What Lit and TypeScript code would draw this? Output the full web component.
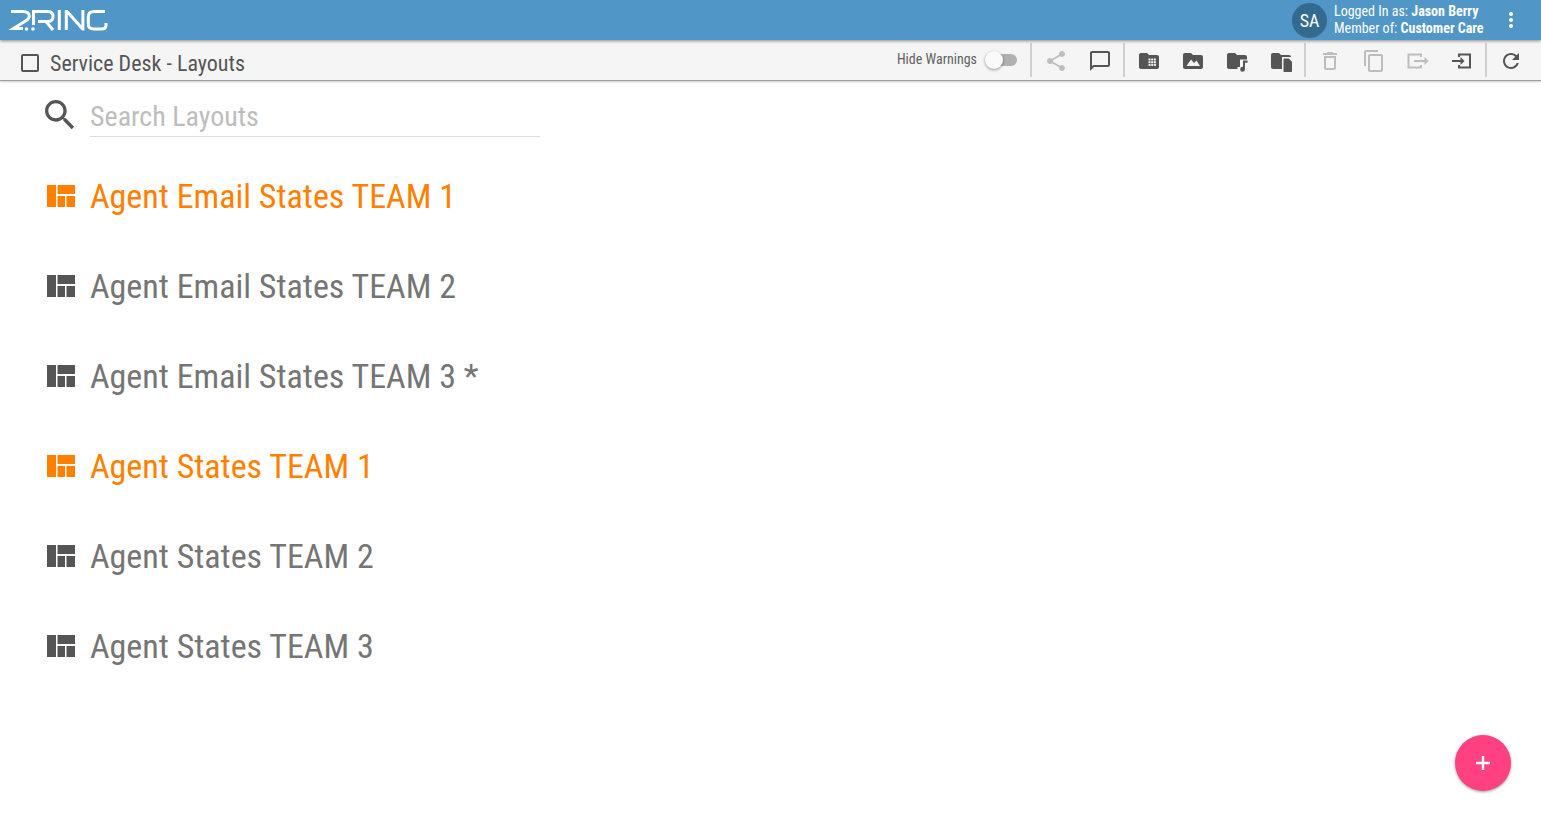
import { LitElement, html, css, svg } from "lit";
import { customElement } from "lit/decorators.js";

const p = (d: string, size = 24) => html`<svg width=${size} height=${size} viewBox="0 0 24 24" fill="currentColor"><path d=${d}></path></svg>`;
const ICONS: Record<string, string> = {
  share: "M18 16.08c-.76 0-1.44.3-1.96.77L8.91 12.7c.05-.23.09-.46.09-.7s-.04-.47-.09-.7l7.05-4.11c.54.5 1.25.81 2.04.81 1.66 0 3-1.34 3-3s-1.34-3-3-3-3 1.34-3 3c0 .24.04.47.09.7L8.04 9.81C7.5 9.31 6.79 9 6 9c-1.66 0-3 1.34-3 3s1.34 3 3 3c.79 0 1.5-.31 2.04-.81l7.12 4.16c-.05.21-.08.43-.08.65 0 1.61 1.31 2.92 2.92 2.92s2.92-1.31 2.92-2.92-1.31-2.92-2.92-2.92z",
  comment: "M20 2H4c-1.1 0-2 .9-2 2v18l4-4h14c1.1 0 2-.9 2-2V4c0-1.1-.9-2-2-2zm0 14H5.17L4 17.17V4h16v12z",
  folder: "M10 4H4c-1.1 0-2 .9-2 2v12c0 1.1.9 2 2 2h16c1.1 0 2-.9 2-2V8c0-1.1-.9-2-2-2h-8l-2-2z",
  trash: "M6 19c0 1.1.9 2 2 2h8c1.1 0 2-.9 2-2V7H6v12zM8 9h8v10H8V9zm7.500-5l-1-1h-5l-1 1H5v2h14V4h-3.500z",
  copy: "M16 1H4c-1.100 0-2 .9-2 2v14h2V3h12V1zm3 4H8c-1.100 0-2 .9-2 2v14c0 1.100.9 2 2 2h11c1.100 0 2-.9 2-2V7c0-1.100-.9-2-2-2zm0 16H8V7h11v14z",
  exit: "M16 8V4.500H1.500v15H16V16h-2v1.500H3.500v-11H14V8zM8 11h10.500V8l4 4-4 4v-3H8z",
  enter: "M8 8V4.500h13v15H8V16h2v1.500h9v-11h-9V8zM2 11h8.500V8l4 4-4 4v-3H2z",
  refresh: "M17.650 6.350C16.200 4.900 14.210 4 12 4c-4.420 0-7.990 3.580-7.990 8s3.570 8 7.990 8c3.730 0 6.840-2.550 7.730-6h-2.080c-.82 2.330-3.040 4-5.650 4-3.310 0-6-2.690-6-6s2.690-6 6-6c1.660 0 3.140.69 4.220 1.780L13 11h7V4l-2.350 2.350z",
  search: "M15.500 14h-.79l-.28-.27C15.410 12.590 16 11.110 16 9.500 16 5.910 13.090 3 9.500 3S3 5.910 3 9.500 5.910 16 9.500 16c1.610 0 3.090-.59 4.230-1.570l.27.28v.79l5 4.990L20.490 19l-4.990-5zm-6 0C7.010 14 5 11.990 5 9.500S7.010 5 9.500 5 14 7.010 14 9.500 11.990 14 9.500 14z",
};
const ITEMS = [
  ["Agent Email States TEAM 1", true],
  ["Agent Email States TEAM 2", false],
  ["Agent Email States TEAM 3 *", false],
  ["Agent States TEAM 1", true],
  ["Agent States TEAM 2", false],
  ["Agent States TEAM 3", false],
] as const;

@customElement("app-root")
export class AppRoot extends LitElement {
  static styles = css`
    :host { display: block; height: 821px; position: relative; overflow: hidden; background: #fff; font-family: Roboto, sans-serif; font-stretch: 75%; color: #616161; }
    .top { height: 40px; background: #5096c6; display: flex; align-items: center; color: #fff; box-shadow: 0 1px 3px rgba(0,0,0,.45); position: relative; z-index: 2; }
    .logo { margin-left: 8px; display: block; }
    .spacer { flex: 1; }
    .avatar { width: 35px; height: 35px; border-radius: 50%; background: #356a90; display: flex; align-items: center; justify-content: center; font-size: 18px; margin-right: 7px; }
    .who { font-size: 14px; line-height: 17px; width: 165px; }
    .who b { font-weight: 700; }
    .dots { width: 24px; display: flex; flex-direction: column; align-items: center; gap: 2px; margin-right: 18px; }
    .dots i { width: 4px; height: 4px; border-radius: 50%; background: #fff; }
    .bar { height: 41px; box-sizing: border-box; background: #f5f5f5; border-bottom: 1px solid #9e9e9e; box-shadow: 0 1px 2px rgba(0,0,0,.2); display: flex; align-items: center; }
    .check { width: 14px; height: 14px; border: 2px solid #555; border-radius: 2px; margin: 6px 0 0 21px; }
    .title { font-size: 22px; color: #555; margin: 6px 0 0 11px; }
    .hide { font-size: 14px; color: #616161; margin: 0 8px 2px 0; }
    .switch { width: 32px; height: 20px; position: relative; margin-right: 12px; }
    .track { position: absolute; left: 5px; right: 0; top: 4px; height: 12px; border-radius: 6px; background: #b0b0b0; }
    .thumb { position: absolute; left: 0; top: 1px; width: 18px; height: 18px; border-radius: 50%; background: #fafafa; box-shadow: 0 1px 3px rgba(0,0,0,.4); }
    .sep { width: 2px; height: 34px; background: #d0d0d0; margin: 0 2px 0 1px; }
    .ico { width: 44px; height: 38px; margin-top: 2px; display: flex; align-items: center; justify-content: center; color: #555; }
    .ico.dim { color: #bdbdbd; }
    .end { width: 8px; }
    .search { display: flex; align-items: flex-start; padding: 14px 0 0 40px; }
    .search svg { color: #555; display: block; }
    .field { margin-left: 10px; width: 450px; height: 42px; box-sizing: border-box; border-bottom: 1px solid #ddd; font-size: 28px; color: #bdbdbd; line-height: 44px; }
    .list { padding: 14px 0 0 45px; }
    .row { height: 90px; display: flex; align-items: center; font-size: 34px; color: #757575; }
    .row.on { color: #ff8000; }
    .row svg { margin-right: 14px; display: block; color: #555; }
    .row.on svg { color: #ff8000; }
    .fab { position: absolute; left: 1455px; top: 735px; width: 56px; height: 56px; border-radius: 50%; background: #ff4081; color: #fff; display: flex; align-items: center; justify-content: center; box-shadow: 0 1px 3px rgba(0,0,0,.4); }
  `;
  ico(name: string, dim = false) {
    return html`<div class="ico ${dim ? "dim" : ""}">${p(ICONS[name])}</div>`;
  }
  folderBadge(extra: unknown) {
    return html`<div class="ico"><svg width="24" height="24" viewBox="0 0 24 24" fill="currentColor"><path d=${ICONS.folder}></path>${extra}</svg></div>`;
  }
  render() {
    const cells = [11.5, 14.2, 16.9].flatMap((x) => [9.5, 12.2, 14.9].map((y) => svg`<rect x=${x} y=${y} width="2" height="2" fill="#f5f5f5"></rect>`));
    return html`
      <div class="top">
        <svg class="logo" width="100" height="24" viewBox="8 8 100 24" fill="none" stroke="#fff" stroke-width="3">
          <path d="M11 11.500h11.500c4.500 0 6.800 1.500 6.800 4.500 0 2-1 3.200-3 4.500L13.500 28.500h9.500"></path>
          <circle cx="26.500" cy="29" r="1.800" fill="#fff" stroke="none"></circle>
          <circle cx="33" cy="29" r="1.800" fill="#fff" stroke="none"></circle>
          <path d="M33.500 25V11.500h14.500c3.300 0 5 2 5 5s-1.700 5-5 5H38"></path>
          <path d="M46 21.500l7 8.500"></path>
          <path d="M59.300 10v20"></path>
          <path d="M66.300 30V11.500h.8l15.500 17.500h.3V10"></path>
          <path d="M105 11.500H94c-4 0-5.700 2-5.700 5.500v7c0 3 1.700 5 5.700 5h8c3 0 4-1.500 4-4v-2"></path>
        </svg>
        <div class="spacer"></div>
        <div class="avatar">SA</div>
        <div class="who"><div>Logged In as: <b>Jason Berry</b></div><div>Member of: <b>Customer Care</b></div></div>
        <div class="dots"><i></i><i></i><i></i></div>
      </div>
      <div class="bar">
        <div class="check"></div>
        <div class="title">Service Desk - Layouts</div>
        <div class="spacer"></div>
        <div class="hide">Hide Warnings</div>
        <div class="switch"><div class="track"></div><div class="thumb"></div></div>
        <div class="sep"></div>
        ${this.ico("share", true)}${this.ico("comment")}
        <div class="sep"></div>
        ${this.folderBadge(cells)}
        ${this.folderBadge(svg`<path fill="#f5f5f5" d="M5.500 17l4.500-6.500 3 3.500 2.500-2.500 3.500 5.500z"></path>`)}
        ${this.folderBadge(svg`<path fill="#f5f5f5" d="M15 10.500h9v11h-3.500v2.500h-8v-6h2.500z"></path><path d="M18 11.500h4.500v2.200h-2.500v6.500a2.400 2.400 0 1 1-2-2.300z"></path>`)}
        ${this.folderBadge(svg`<path fill="#f5f5f5" d="M13 8h10.500v16H13z"></path><path d="M15.500 9.500h4.300l3.200 3.200V22c0 .6-.5 1-1 1h-6.500c-.6 0-1-.4-1-1V10.500c0-.6.4-1 1-1z"></path>`)}
        <div class="sep"></div>
        ${this.ico("trash", true)}${this.ico("copy", true)}${this.ico("exit", true)}${this.ico("enter")}
        <div class="sep"></div>
        ${this.ico("refresh")}
        <div class="end"></div>
      </div>
      <div class="search">
        ${p(ICONS.search, 40)}
        <div class="field">Search Layouts</div>
      </div>
      <div class="list">
        ${ITEMS.map(([t, on]) => html`<div class="row ${on ? "on" : ""}">
          <svg width="31" height="24" viewBox="0 0 31 24" fill="currentColor"><path d="M2 1h9v22H2zM12.500 1H30v9H12.500zM12.500 12h7.500v11h-7.500zM21.500 12H30v11h-8.500z"></path></svg>
          ${t}</div>`)}
      </div>
      <div class="fab"><svg width="16" height="16" viewBox="0 0 16 16" fill="#fff"><path d="M6.800 1h2.400v14H6.800zM1 6.800h14v2.400H1z"></path></svg></div>
    `;
  }
}
